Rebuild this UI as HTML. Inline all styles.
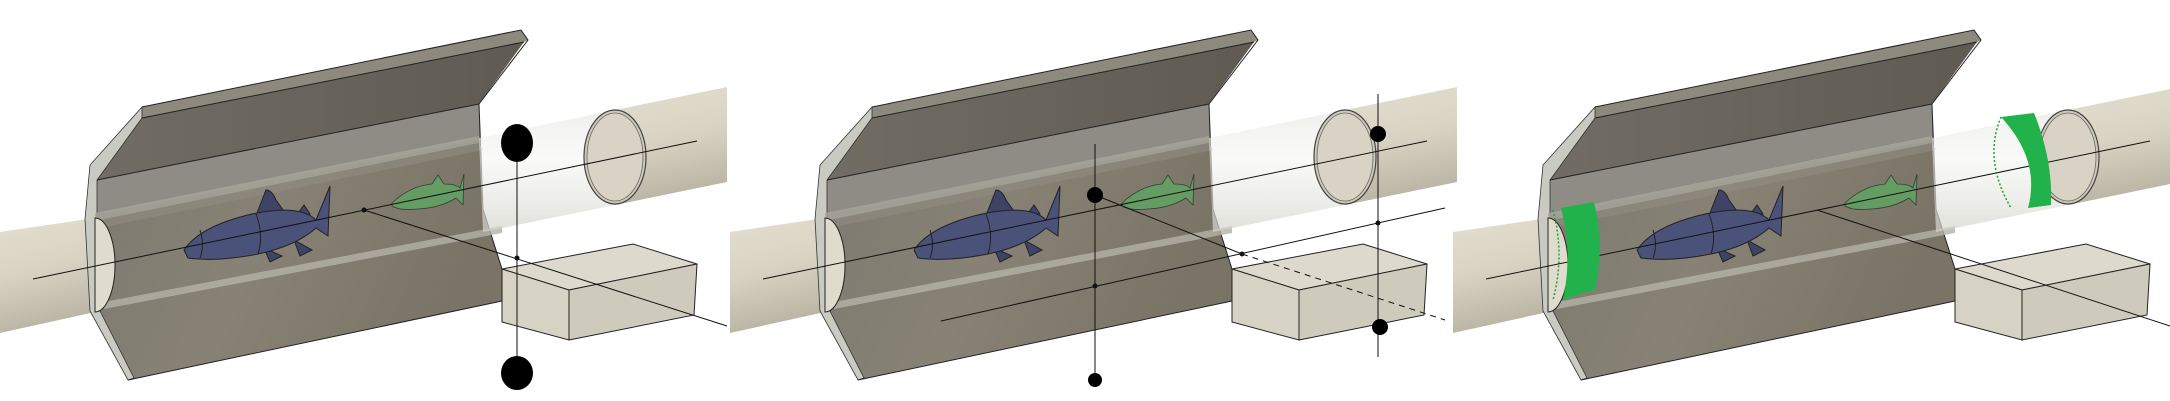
<!DOCTYPE html>
<html><head><meta charset="utf-8"><style>
html,body{margin:0;padding:0;background:#fff;}
svg{display:block}
</style></head><body>
<svg width="2170" height="401" viewBox="0 0 2170 401" xmlns="http://www.w3.org/2000/svg">
<defs>
<linearGradient id="pipe" x1="0" y1="0" x2="0.2" y2="1">
<stop offset="0" stop-color="#e3dfd0"/><stop offset="0.5" stop-color="#d8d3c2"/><stop offset="1" stop-color="#b9b4a3"/>
</linearGradient>
<linearGradient id="wall" x1="0" y1="0" x2="1" y2="0.3">
<stop offset="0" stop-color="#7d796f"/><stop offset="0.5" stop-color="#878275"/><stop offset="1" stop-color="#7a7466"/>
</linearGradient>
<linearGradient id="flange" x1="0" y1="0" x2="1" y2="0">
<stop offset="0" stop-color="#716d64"/><stop offset="1" stop-color="#5f5b53"/>
</linearGradient>
<linearGradient id="glass" x1="0" y1="0" x2="0" y2="1">
<stop offset="0" stop-color="#e8e8e4" stop-opacity="0.7"/><stop offset="0.4" stop-color="#f6f6f4" stop-opacity="0.6"/><stop offset="1" stop-color="#d4d4cc" stop-opacity="0.7"/>
</linearGradient>
<g id="base">
  <!-- left pipe -->
  <polygon points="0,232 95,218 95,312 0,333" fill="url(#pipe)"/>
  <!-- trough body -->
  <polygon points="97,180 479,104 483,209 502,269 502,301 128,380 97,311" fill="url(#wall)"/>
  <polygon points="97,180 479,104 479,140 97,215" fill="#8e8c84"/>
  <!-- back flange -->
  <polygon points="142,116 524,42 479,104 97,180" fill="url(#flange)"/>
  <polygon points="142,107 521,30 528,40 524,42 142,118" fill="#8d897d"/>
  <!-- left edge light strip -->
  <polygon points="142,107 90,165 85,219 90,311 128,380 134,378 100,311 97,219 97,180 142,118" fill="#c9cac2" stroke="#333" stroke-width="0.8"/>
  <polyline points="142,107 521,30 528,40 479,104 483,209 502,269" fill="none" stroke="#222" stroke-width="1"/>
  <line x1="142" y1="118" x2="524" y2="42" stroke="#222" stroke-width="1"/>
  <line x1="97" y1="180" x2="479" y2="104" stroke="#222" stroke-width="1"/>
  <line x1="128" y1="380" x2="502" y2="301" stroke="#222" stroke-width="1"/>
  <!-- tube bands in trough -->
  <polygon points="95,213 479,136 479,143 95,221" fill="#a8a69c" opacity="0.8"/>
  <polygon points="104,302 502,226 502,233 104,309" fill="#b4b1a6" opacity="0.8"/>
  <polygon points="95,221 479,143 483,150 99,228" fill="#8f8c82" opacity="0.6"/>
  <!-- left pipe cap -->
  <path d="M95,218 A20,47 0 0 1 95,312 Z" fill="#e0dccd" stroke="#222" stroke-width="1"/>
  <!-- transparent pipe -->
  <polygon points="479,138 615,110 615,205 483,232" fill="url(#glass)"/>
  <polygon points="615,110 727,87 727,182 615,205" fill="url(#pipe)"/>
  <ellipse cx="615" cy="157" rx="31" ry="47" fill="#cfcab9" stroke="#444" stroke-width="1.2"/>
  <ellipse cx="615" cy="157" rx="28" ry="44" fill="#d8d3c4" stroke="#666" stroke-width="0.8"/>
  <!-- box -->
  <polygon points="502,269 633,244 697,264 569,290" fill="#ddd9cc" stroke="#222" stroke-width="1"/>
  <polygon points="502,269 569,290 569,340 502,322" fill="#d6d2c4" stroke="#222" stroke-width="1"/>
  <polygon points="569,290 697,264 694,315 569,340" fill="#cecabc" stroke="#222" stroke-width="1"/>
  <!-- blue fish -->
  <g stroke="#222" stroke-width="1">
    <path d="M255,218 L266,190 Q272,190 276,200 L286,214 Z" fill="#3f4466"/>
    <path d="M296,216 L304,205 L310,214 Z" fill="#3f4466"/>
    <path d="M264,248 L270,262 L282,256 Z M294,240 L300,256 L312,250 Z" fill="#3f4466"/>
    <path d="M184,250 Q200,226 252,214 Q300,204 316,220 L330,186 L328,236 L316,228 Q296,246 258,254 Q218,262 188,258 Z" fill="#4b527a"/>
    <path d="M200,230 Q205,245 200,258" fill="none"/>
    <path d="M256,214 Q264,235 258,254" fill="none"/>
  </g>
  <!-- green fish -->
  <g stroke="#2a3a2a" stroke-width="0.8">
    <path d="M392,203 Q410,186 432,184 L438,175 L444,184 Q456,184 460,188 L464,174 L463,205 L456,198 Q440,208 418,209 Q400,211 392,206 Z" fill="#63a064" opacity="0.9"/>
  </g>
  <!-- axis line -->
  <line x1="33" y1="279" x2="697" y2="141" stroke="#111" stroke-width="1"/>
</g>
</defs>

<!-- Panel 1 -->
<use href="#base"/>
<line x1="364" y1="210" x2="727" y2="326" stroke="#111" stroke-width="1"/>
<circle cx="364" cy="210" r="2.5" fill="#111"/>
<line x1="517" y1="143" x2="517" y2="373" stroke="#111" stroke-width="1"/>
<ellipse cx="517" cy="143" rx="16" ry="19" fill="#000"/>
<ellipse cx="517" cy="373" rx="16" ry="17" fill="#000"/>
<circle cx="517" cy="258" r="2.5" fill="#111"/>

<!-- Panel 2 -->
<g transform="translate(730,0)">
<use href="#base"/>
<line x1="365" y1="144" x2="365" y2="380" stroke="#111" stroke-width="1"/>
<line x1="648" y1="94" x2="648" y2="357" stroke="#111" stroke-width="1"/>
<line x1="211" y1="321" x2="715" y2="208" stroke="#111" stroke-width="1"/>
<line x1="365" y1="195" x2="512" y2="254" stroke="#111" stroke-width="1"/>
<line x1="512" y1="254" x2="715" y2="320" stroke="#111" stroke-width="1" stroke-dasharray="6,5"/>
<circle cx="365" cy="195" r="8" fill="#000"/>
<circle cx="365" cy="286" r="2.5" fill="#111"/>
<circle cx="365" cy="380" r="7" fill="#000"/>
<circle cx="648" cy="134" r="8" fill="#000"/>
<circle cx="648" cy="223" r="2.5" fill="#111"/>
<circle cx="650" cy="327" r="8" fill="#000"/>
<circle cx="512" cy="254" r="2.5" fill="#111"/>
</g>

<!-- Panel 3 -->
<g transform="translate(1453,0)">
<use href="#base"/>
<line x1="364" y1="210" x2="717" y2="326" stroke="#111" stroke-width="1"/>
<path d="M108,208 L141,202 Q152,246 142,290 L133,292 L110,300 Q120,252 108,208 Z" fill="#21b24b"/>
<path d="M100,210 Q112,255 100,300" fill="none" stroke="#21a040" stroke-width="1.5" stroke-dasharray="2,2"/>
<path d="M548,117 L581,113 Q600,160 598,205 L575,208 Q588,160 548,117 Z" fill="#21b24b"/>
<path d="M548,117 Q530,160 558,208" fill="none" stroke="#21a040" stroke-width="1.5" stroke-dasharray="2,2"/>
</g>
</svg>
</body></html>
